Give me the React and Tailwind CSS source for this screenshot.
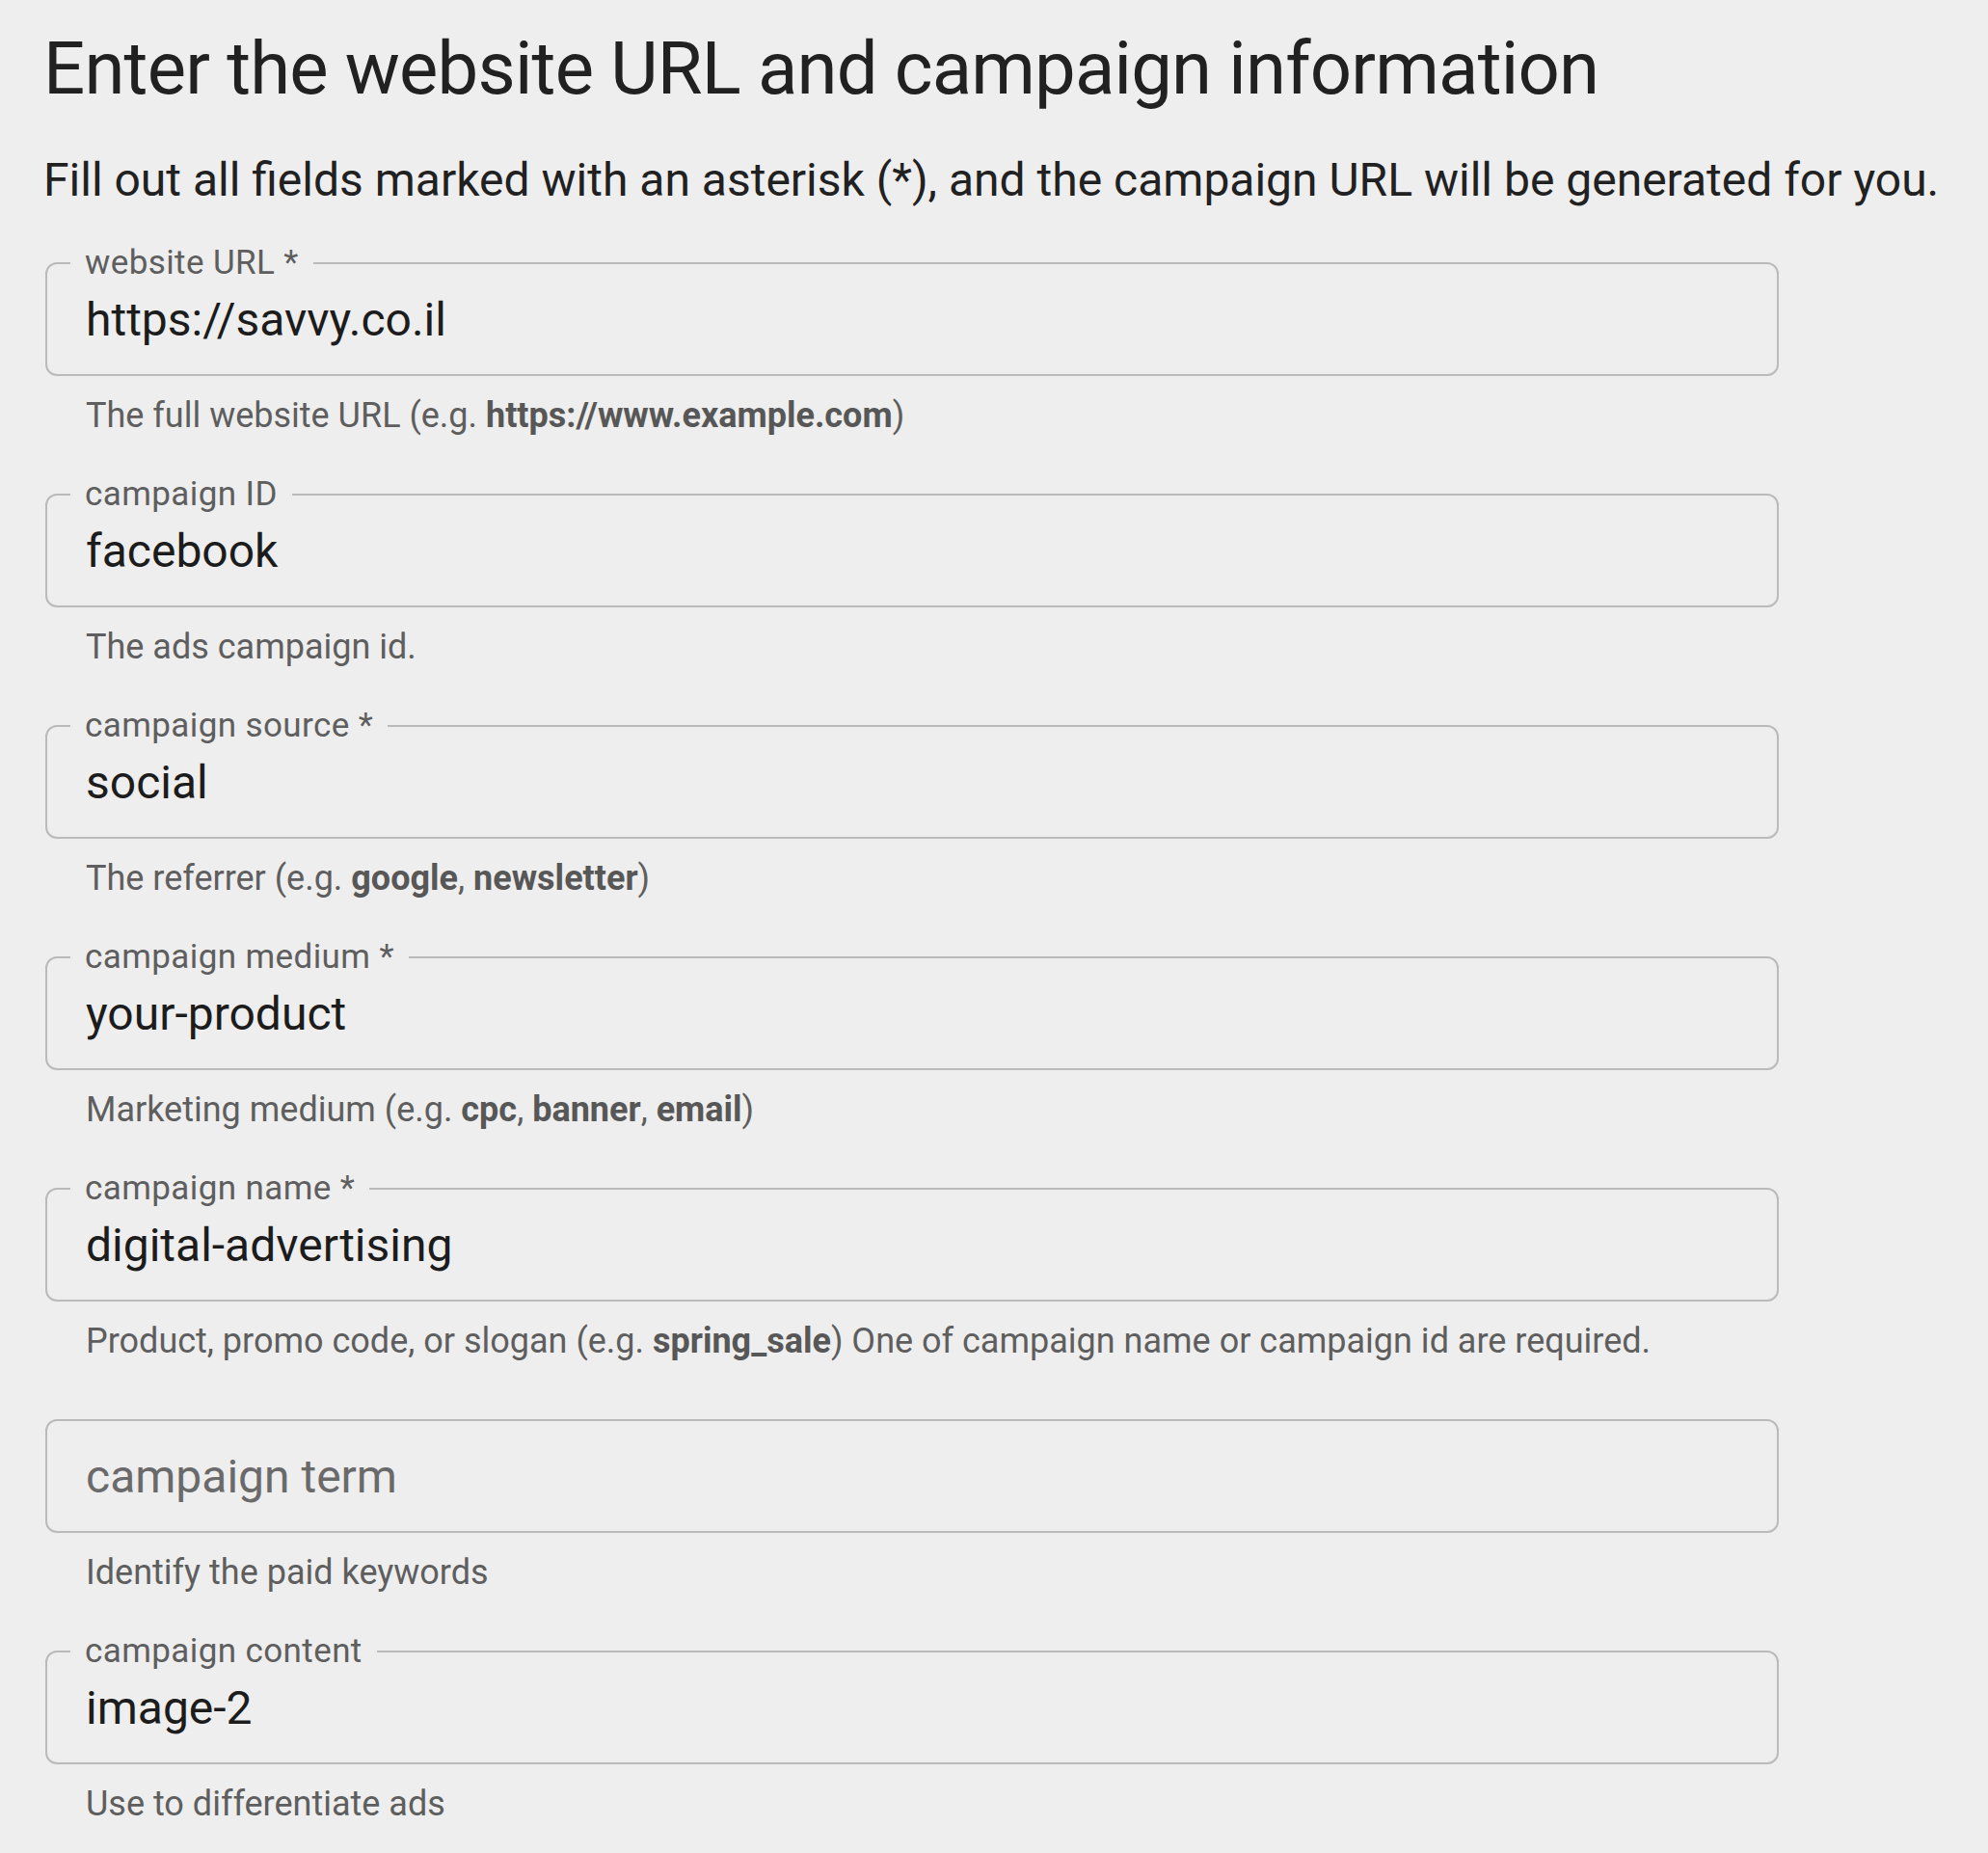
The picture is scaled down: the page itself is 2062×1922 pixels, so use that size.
import React from 'react';

const B = ({ children }) => <b className="font-bold text-[#575757]">{children}</b>;

const fields = [
  {
    label: 'website URL *',
    value: 'https://savvy.co.il',
    help: <>The full website URL (e.g. <B>https://www.example.com</B>)</>,
  },
  {
    label: 'campaign ID',
    value: 'facebook',
    help: <>The ads campaign id.</>,
  },
  {
    label: 'campaign source *',
    value: 'social',
    help: <>The referrer (e.g. <B>google</B>, <B>newsletter</B>)</>,
  },
  {
    label: 'campaign medium *',
    value: 'your-product',
    help: <>Marketing medium (e.g. <B>cpc</B>, <B>banner</B>, <B>email</B>)</>,
  },
  {
    label: 'campaign name *',
    value: 'digital-advertising',
    help: <>Product, promo code, or slogan (e.g. <B>spring_sale</B>) One of campaign name or campaign id are required.</>,
  },
  {
    label: null,
    placeholder: 'campaign term',
    help: <>Identify the paid keywords</>,
  },
  {
    label: 'campaign content',
    value: 'image-2',
    help: <>Use to differentiate ads</>,
  },
];

const Field = ({ label, value, placeholder, help }) => (
  <div className="mb-[63px]">
    <div className="relative h-[118px] w-[1798px] rounded-[12px] border-2 border-[#bababa] flex items-center pl-[40px] pt-[2px]">
      {label && (
        <span className="absolute left-[24px] top-[-2px] -translate-y-1/2 bg-[#eeeeee] px-[15px] text-[35px] leading-none tracking-[0.4px] text-[#5e5e5e]">
          {label}
        </span>
      )}
      {value ? (
        <span className="text-[48px] leading-none text-[#1c1c1c]">{value}</span>
      ) : (
        <span className="text-[48px] leading-none text-[#6a6a6a]">{placeholder}</span>
      )}
    </div>
    <p className="mt-[23px] pl-[42px] text-[36px] leading-none text-[#5e5e5e]">{help}</p>
  </div>
);

export default function App() {
  return (
    <div className="min-h-[1922px] bg-[#eeeeee] pl-[45px] pt-[33px] font-['Roboto',sans-serif]">
      <h1 className="text-[76px] leading-none tracking-[-0.8px] text-[#212121]">Enter the website URL and campaign information</h1>
      <p className="mt-[54px] text-[48px] leading-none text-[#212121]">
        Fill out all fields marked with an asterisk (*), and the campaign URL will be generated for you.
      </p>
      <div className="mt-[61px] pl-[2px]">
        {fields.map((f, i) => (
          <Field key={i} {...f} />
        ))}
      </div>
    </div>
  );
}
